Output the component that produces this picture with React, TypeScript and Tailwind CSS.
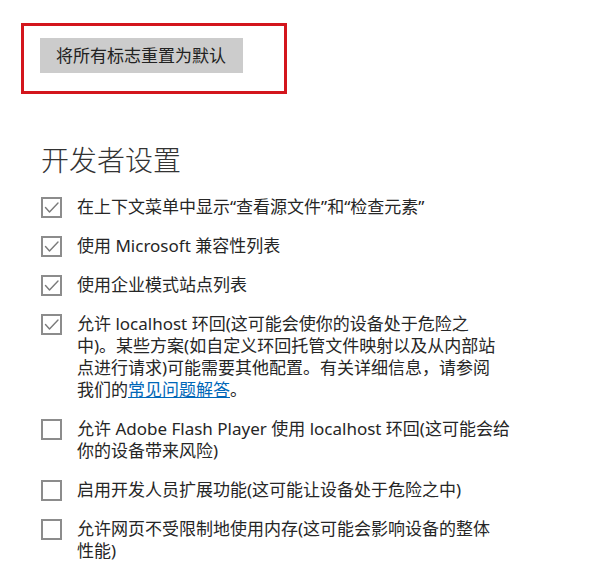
import React from "react";

function Box({ checked }: { checked: boolean }) {
  return (
    <div className="relative mt-[1px] h-[21px] w-[21px] shrink-0 border-2 border-[#8c8c8c] bg-white">
      {checked && (
        <svg
          className="absolute left-[-2px] top-[-2px]"
          width="21"
          height="21"
          viewBox="0 0 21 21"
          fill="none"
        >
          <polyline
            points="4.5,10.5 8.5,15 17,6"
            stroke="#7a7a7a"
            strokeWidth="1.4"
            strokeLinecap="round"
            strokeLinejoin="round"
          />
        </svg>
      )}
    </div>
  );
}

function Item({ checked, lines }: { checked: boolean; lines: React.ReactNode[] }) {
  return (
    <div className="flex gap-[15px]">
      <Box checked={checked} />
      <div className="flex flex-col text-[17px] leading-[22px] text-[#262626]">
        {lines.map((l, i) => (
          <span key={i} className="whitespace-nowrap">
            {l}
          </span>
        ))}
      </div>
    </div>
  );
}

export default function App() {
  return (
    <div
      className="h-[561px] w-[616px] overflow-hidden bg-white pt-[23px]"
      style={{ fontFamily: '"Noto Sans", "Noto Sans CJK SC", sans-serif' }}
    >
      <div className="ml-[21px] h-[71px] w-[266px] border-[3px] border-[#d3161d] pl-[16px] pt-[12px]">
        <div className="flex h-[35px] w-[203px] items-center bg-[#cccccc] pl-[16px] text-[17px] text-[#222222]">
          将所有标志重置为默认
        </div>
      </div>
      <h2 className="ml-[41px] mt-[52px] text-[28px] leading-[28px] font-light text-[#333333]">
        开发者设置
      </h2>
      <div className="ml-[41px] mt-[22px] flex flex-col gap-[17px]">
        <Item checked lines={["在上下文菜单中显示“查看源文件”和“检查元素”"]} />
        <Item checked lines={["使用 Microsoft 兼容性列表"]} />
        <Item checked lines={["使用企业模式站点列表"]} />
        <Item
          checked
          lines={[
            "允许 localhost 环回(这可能会使你的设备处于危险之",
            "中)。某些方案(如自定义环回托管文件映射以及从内部站",
            "点进行请求)可能需要其他配置。有关详细信息，请参阅",
            <>
              我们的<span className="text-[#0067b8] underline">常见问题解答</span>。
            </>,
          ]}
        />
        <Item
          checked={false}
          lines={[
            "允许 Adobe Flash Player 使用 localhost 环回(这可能会给",
            "你的设备带来风险)",
          ]}
        />
        <Item checked={false} lines={["启用开发人员扩展功能(这可能让设备处于危险之中)"]} />
        <Item
          checked={false}
          lines={["允许网页不受限制地使用内存(这可能会影响设备的整体", "性能)"]}
        />
      </div>
    </div>
  );
}
